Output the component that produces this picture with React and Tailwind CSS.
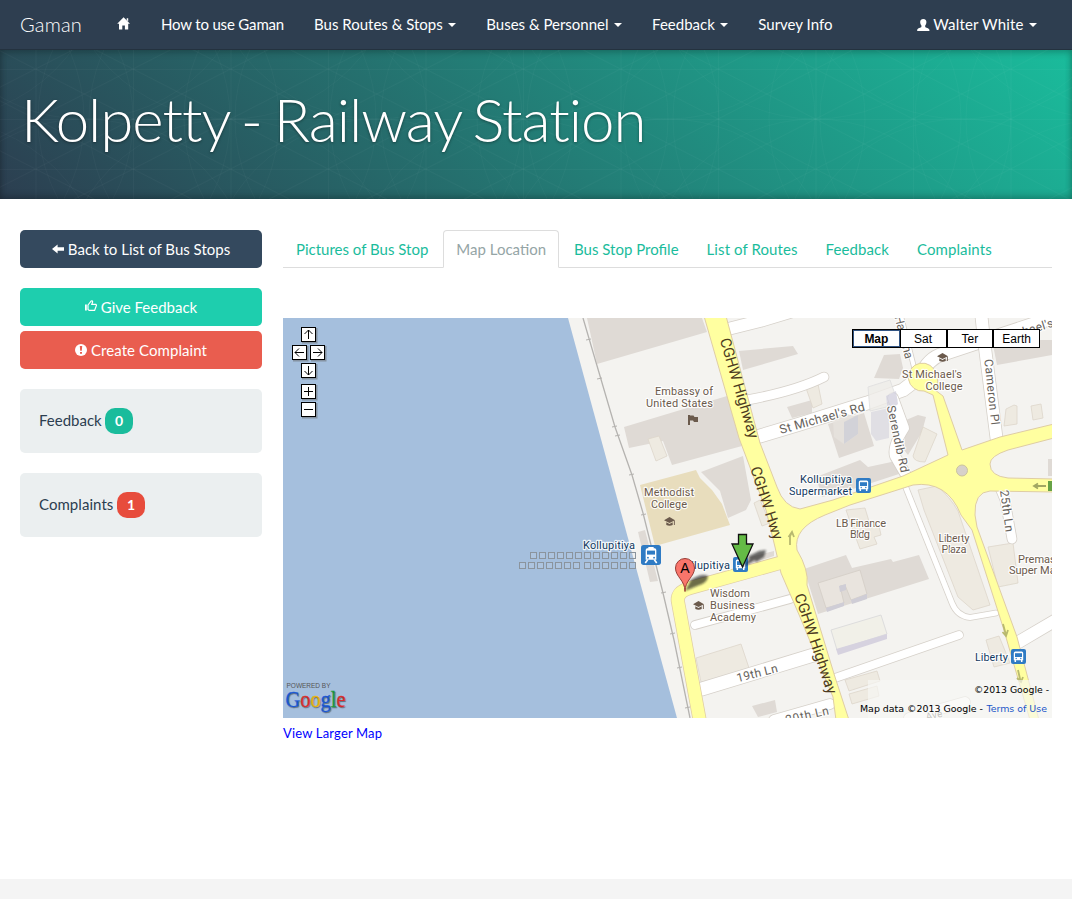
const Caret = () => (
  <span className="ml-[5.500px] inline-block h-0 w-0 border-x-4 border-t-4 border-x-transparent border-t-white align-[3px]" />
);

const UserIcon = () => (
  <svg className="mr-[3px] inline-block h-[12px] w-[13px] align-[-1px]" viewBox="0 0 13 12" fill="currentColor">
    <path d="M6.3 0C8.5 0 9.6 1.3 9.4 3.4C9.3 5 8.5 5.8 8.2 6.6V8.1C8.6 8.9 12 9.2 12.4 10.8V12H.2V10.8C.6 9.2 4 8.9 4.4 8.1V6.6C4.1 5.8 3.3 5 3.2 3.4C3 1.3 4.1 0 6.3 0Z" />
  </svg>
);

const HomeIcon = () => (
  <svg className="inline-block h-[13px] w-[14px] align-[-1px]" viewBox="0 0 14 13" fill="currentColor">
    <path d="M6.6 .3L13 6.8H11.2V12.6H7.9V8.6H5.3V12.6H2V6.8H.2L6.6 .3ZM9.7 1.2H11.2V4.6L9.7 3Z" />
  </svg>
);

const NAV = [
  ["How to use Gaman", false],
  ["Bus Routes & Stops", true],
  ["Buses & Personnel", true],
  ["Feedback", true],
  ["Survey Info", false],
];

const TABS = ["Pictures of Bus Stop", "Map Location", "Bus Stop Profile", "List of Routes", "Feedback", "Complaints"];

function Navbar() {
  return (
    <nav className="flex h-[50px] items-center border-b border-[#24323f] bg-[#2e3e50] pb-[2px] text-[15px] leading-[20px] text-white">
      <a className="ml-[20px] mr-[20px] w-[62px] whitespace-nowrap text-[20px] font-light tracking-[0.200px]">Gaman</a>
      <a className="-mt-[1px] px-[15px]"><HomeIcon /></a>
      {NAV.map(([label, menu], i) => (
        <a key={label} className={"whitespace-nowrap px-[15px]" + (i === 0 ? " tracking-[-0.170px]" : "")}>{label}{menu && <Caret />}</a>
      ))}
      <a className="ml-auto mr-[20px] whitespace-nowrap px-[15px] tracking-[0.150px]"><UserIcon />Walter White<Caret /></a>
    </nav>
  );
}

function Banner() {
  return (
    <header className="relative h-[149px] bg-[linear-gradient(45deg,#2c3e50_0%,#1abc9c_100%)] shadow-[inset_0_3px_7px_rgba(0,0,0,0.2),inset_0_-3px_7px_rgba(0,0,0,0.2)]">
      <svg className="absolute inset-0 h-full w-full" aria-hidden="true">
        <defs>
          <pattern id="lattice" width="195" height="100" x="-62" y="19" patternUnits="userSpaceOnUse">
            <g fill="none" stroke="#fff" strokeOpacity=".028" strokeWidth="1">
              <path d="M.5 0V100M98 0V100M0 .5H195M0 50.500H195" />
              <path d="M0 0L195 100M97.500 0L195 50M0 50L97.500 100M97.500 0L0 50M195 0L0 100M195 50L97.500 100" />
            </g>
          </pattern>
        </defs>
        <rect width="100%" height="100%" fill="url(#lattice)" />
        <g fill="none" stroke="#fff" strokeOpacity=".028">
          {[-210, -64, 84, 230, 376, 522, 668, 815, 961, 1107, 1253].map((x) => (
            <g key={x}>
              <circle cx={x - 169} cy="69" r="169" />
              <circle cx={x + 174} cy="69" r="169" />
              <circle cx={x} cy="-100" r="169" />
              <circle cx={x} cy="238" r="169" />
            </g>
          ))}
        </g>
      </svg>
      <h1 className="relative whitespace-nowrap pl-[21px] pt-[34px] text-[60px] font-light leading-[70px] tracking-[-1.050px] text-white [font-variant-ligatures:none] [text-shadow:0_1px_3px_rgba(0,0,0,0.4)] [word-spacing:-3.500px]">
        Kolpetty - Railway Station
      </h1>
    </header>
  );
}

function Sidebar() {
  const btn = "flex h-[38px] items-center justify-center rounded-[5px] text-[15px] text-white";
  return (
    <aside className="w-[242px]">
      <a className={btn + " bg-[#34495e]"}>
        <svg className="mr-[4px] h-[10px] w-[12px]" viewBox="0 0 12 10" fill="currentColor"><path d="M0 5L5.600 .4V3.300H12V6.700H5.600V9.600Z" /></svg>
        Back to List of Bus Stops
      </a>
      <a className={btn + " mt-[20px] bg-[#1eceae]"}>
        <svg className="mr-[4px] -mt-[2px] h-[12px] w-[12px]" viewBox="0 0 12 12" fill="none" stroke="currentColor" strokeWidth="1.200">
          <path d="M0 4.500H1.800V10.500H0Z" fill="currentColor" stroke="none" />
          <path d="M3 5L6.200 1Q7.800 .6 7.600 2L6.800 4.400H11Q11.800 5 11.200 6L9.600 10.400H4.200L3 9.500Z" />
        </svg>
        Give Feedback
      </a>
      <a className={btn + " mt-[5px] bg-[#e95d4f] tracking-[0.080px]"}>
        <svg className="mr-[4px] -mt-[1px] h-[12px] w-[12px]" viewBox="0 0 12 12"><circle cx="6" cy="6" r="6" fill="#fff" /><path d="M4.800 2H7.200L6.800 6.800H5.200ZM5 8H7V9.800H5Z" fill="#e95d4f" /></svg>
        Create Complaint
      </a>
      <div className="mt-[20px] flex h-[64px] items-center rounded-[5px] bg-[#ebeff0] pl-[19px] text-[15px] text-[#2c3e50]">
        <span className="-mt-[2px] w-[63px]">Feedback</span><span className="ml-[3px] flex h-[26px] w-[28px] items-center justify-center rounded-[10px] bg-[#1abc9c] pb-[2px] text-[14px] font-bold text-white">0</span>
      </div>
      <div className="mt-[20px] flex h-[64px] items-center rounded-[5px] bg-[#ebeff0] pl-[19px] text-[15px] text-[#2c3e50]">
        <span className="-mt-[2px] w-[75px] tracking-[0.050px]">Complaints</span><span className="ml-[3px] flex h-[26px] w-[28px] items-center justify-center rounded-[10px] bg-[#e74c3c] pb-[2px] text-[14px] font-bold text-white">1</span>
      </div>
    </aside>
  );
}

const Road = ({ d, w }) => (
  <g fill="none" strokeLinecap="round" strokeLinejoin="round">
    <path d={d} stroke="#d6d1ca" strokeWidth={w + 1.6} />
    <path d={d} stroke="#fff" strokeWidth={w} />
  </g>
);

const Bus = ({ x, y, s = 15, train }) => (
  <g transform={`translate(${x} ${y}) scale(${s / 15})`}>
    <rect width="15" height="15" rx="2" fill="#2f7bc4" />
    {train ? (
      <>
        <path d="M5.500 1.500H9.500V2.500H10.500Q11.500 2.700 11.500 4V11H3.500V4Q3.500 2.700 4.500 2.500H5.500Z" fill="#fff" />
        <path d="M4.500 4.200H10.500V7.200H4.500Z" fill="#2f7bc4" />
        <path d="M5 11L3.200 13.500M10 11L11.800 13.500" stroke="#fff" strokeWidth="1.200" />
      </>
    ) : (
      <>
        <path d="M2.800 4Q2.800 2.500 4.300 2.500H10.700Q12.200 2.500 12.200 4V11.300H2.800Z" fill="#fff" />
        <path d="M4 4.200H11V8H4Z" fill="#2f7bc4" />
        <path d="M4.300 11V13M10.700 11V13" stroke="#fff" strokeWidth="1.500" />
      </>
    )}
    <circle cx="5.200" cy="9.500" r=".7" fill="#2f7bc4" /><circle cx="9.800" cy="9.500" r=".7" fill="#2f7bc4" />
  </g>
);

const Cap = ({ x, y }) => (
  <g transform={`translate(${x} ${y})`} fill="#6b5a4c">
    <path d="M0 3.200L5.500 0L11 3.200L5.500 6Z" /><path d="M2.300 5.200L5.500 7L8.700 5.200V8Q5.500 9.600 2.300 8Z" /><path d="M9.900 3.500H10.800V8H9.900Z" />
  </g>
);

const LABELS = [
  [684, 395, 58, "Embassy of"], [679.500, 407, 67, "United States"],
  [669, 496, 50, "Methodist"], [669, 508, 36, "College"],
  [932, 378, 60, "St Michael's"], [944, 390, 37, "College"],
  [861, 527, 50, "LB Finance"], [860, 538, 20, "Bldg"],
  [954, 542, 31, "Liberty"], [954, 553, 25, "Plaza"],
  [730, 597, 40, "Wisdom"], [732.500, 609, 45, "Business"], [733, 621, 46, "Academy"],
];
const BLUE = [
  [609, 549, 52, "Kollupitiya"], [826, 483, 52, "Kollupitiya"], [820.500, 495, 63, "Supermarket"],
  [704, 569, 52, "Kollupitiya"], [991.500, 661, 33, "Liberty"],
];
const STREETS = [
  [739.500, 388, 73.500, 104, 15, "CGHW Highway"], [767, 503, 72, 76, 15, "CGHW Hwy"], [816, 643.500, 71.500, 105, 15, "CGHW Highway"],
  [822, 418, -15.500, 88, 12.500, "St Michael's Rd"], [992, 392, 84, 66, 12, "Cameron Pl"],
  [898, 439, 78, 68, 12, "Serendib Rd"], [1007, 511, 82, 42, 12, "25th Ln"],
  [757, 673, -14, 42, 12, "19th Ln"], [807, 715, -13, 44, 12, "20th Ln"],
  [1028, 330, -17, 52, 12, "Michael's"], [904, 337, 76, 44, 12, "Havelina"],
  [934, 715, -12, 17, 10, "Ave"],
];
const BOXES = [[529.500, 552, 12], [518.500, 562, 7], [584, 562, 6]];
const CONTROLS = [
  [301, 327, "M7.500 12V3M3.500 7L7.500 3L11.500 7"], [292, 345, "M12 7.500H3M7 3.500L3 7.500L7 11.500"],
  [310, 345, "M3 7.500H12M8 3.500L12 7.500L8 11.500"], [301, 363, "M7.500 3V12M3.500 8L7.500 12L11.500 8"],
  [301, 384, "M7.500 3V12M3 7.500H12"], [301, 402, "M3 7.500H12"],
];

function GoogleMap() {
  return (
    <svg className="absolute inset-0 h-full w-full" viewBox="283 318 769 400" fontFamily="Roboto, 'Liberation Sans', sans-serif">
      <rect x="283" y="318" width="769" height="400" fill="#f4f3f0" />
      <path d="M283 318H568L677 718H283Z" fill="#a5bfdd" />
      <g fill="#dfdad5">
        <path d="M587 318H702L707 332L597 364Z" />
        <path d="M624 427L727 396L742 446L672 465L663 441L629 448Z" />
        <path d="M701 472L743 456L751 500L746 510L728 518L720 491Z" />
        <path d="M739 351L793 346L798 354L743 370Z" />
        <path d="M787 407L812 400L812 413L792 418Z" />
        <path d="M874 378L884 355L900 354L903 368L899 379Z" />
        <path d="M828 424L864 413L874 446L839 458Z" />
        <path d="M906 420L918 415L926 417L922 432L908 455L904 450Z" />
        <path d="M816 477L860 460L868 467L896 461L902 473L850 490L822 497Z" />
        <path d="M992 340H1052V355L997 365Z" />
        <path d="M804 569L846 555L852 568L891 559L893 562L919 555L929 579L818 614Z" />
        <path d="M638 532L645 530L658 581L650 582Z" />
        <path d="M752 706L775 700L777 712L758 717Z" />
        <path d="M735 561L774 551L774 556L740 567Z" />
        <path d="M1048 459H1052V476H1048Z" />
      </g>
      <path d="M640 485L696 470L700 478L712 490L722 504L730 525L655 546Z" fill="#e8ddbd" />
      <g fill="#eeeae1" stroke="#ddd6ca" strokeWidth=".8">
        <path d="M648 439L659 436L667 456L656 461Z" />
        <path d="M754 503L760 500L770 523L762 526Z" />
        <path d="M923 427L937 434L925 462Q914 462 913 456Z" />
        <path d="M918 490L937 486Q950 497 958 511L990 605L973 610L958 597L924 510Z" />
        <path d="M846 510L865 508L871 528L879 526L881 535L874 537L877 544L860 549L853 530Z" />
        <path d="M988 547L1013 543L1018 583L998 587Z" />
        <path d="M986 640L999 636L1010 663L994 667Z" />
        <path d="M696 658L741 644L750 671L701 682Z" />
        <path d="M845 680L877 671L880 681L849 691Z" /><path d="M849 694L877 686L879 696L852 704Z" />
        <path d="M1006 409L1014 405L1017 406V424L1004 426Z" /><path d="M1031 406L1041 404L1043 418L1033 420Z" />
        <path d="M806 388L818 384L822 404L813 408Z" />
      </g>
      <g stroke="#b5b3b0" fill="none">
        <path d="M583 318L615 427L632 475L643 513L663 593L674 640L690 718" strokeWidth="1.300" />
        <path d="M586 340L591 339M597 379L602 378M612 427L617 426M615 436L620 435M629 475L634 474M641 515L646 514M661 593L666 592M670 634L675 633M677 668L682 667M685 708L690 707" />
      </g>
      <Road d="M720 331L760 321L790 312" w={12} />
      <Road d="M747 400Q796 391 824 377" w={9} />
      <Road d="M760 436L800 424L867 403L903 390L920 377Q928 358 943 354L1052 318" w={13} />
      <Road d="M900 312L916 375" w={4} />
      <Road d="M981 312L984 340L997 442" w={12} />
      <Road d="M893 398L904 428Q892 447 895 456L906 475" w={10} />
      <Road d="M906 488L952 603Q957 616 970 617.500L996 613" w={5} />
      <Road d="M1000 488L1005 500L1012 539" w={9} />
      <Road d="M695 625L790 599" w={8} />
      <Road d="M702 689L820 653" w={13} />
      <Road d="M835 678L959 635" w={8} />
      <Road d="M774 720L830 704M909 718L965 702" w={10} />
      <Road d="M1017 643L1056 620" w={12} />
      <path d="M783 562L690 588Q676 592 678 602L700 722" stroke="#dfcda4" strokeWidth="14" fill="none" />
      <path d="M704 316L739 438L766 510L775 547L781 573L800 617L833 697L836 720H849L835 677L807 585Q809 570 797 550Q793 528 825 515L850 505L913 485Q947 480 961 515L972 530L1003 627L1030 720H1039L1017 637L977 527L975 515Q974 492 990 491L1054 492V479L1008 478Q990 476 990 464Q990 456 1008 450L1054 438V424L1000 437L962 450L943 396L935 390Q940 382 936 374A14 14 0 1 0 924 391L933 395L948 455L903 476L833 500L800 509Q784 507 777 487L760 443L726 316Z" fill="#ffffa0" stroke="#dfcda4" />
      <path d="M787 561L690 588Q676 592 678 602L700 722" stroke="#ffffa0" strokeWidth="12.500" fill="none" />
      <circle cx="962" cy="470.500" r="5.500" fill="#d7d1ca" stroke="#cbc39d" />
      <g opacity=".8">
        <path d="M868 387L890 380L897 400L895 405L870 411Z" fill="#efede9" stroke="#ddd" />
        <path d="M871 412L889 408V438L876 441L871 434Z" fill="#dcdbe2" /><path d="M886 396L896 391L898 404L888 412Z" fill="#d4d2df" />
        <path d="M833 419L843 412L855 417L858 434L844 444L834 437Z" fill="#e7e3de" /><path d="M844 422L858 415V434L844 444Z" fill="#d0d1d9" />
      </g>
      <path d="M818 583L860 570L867 594L851 600L845 585L840 586L844 603L826 608Z" fill="#e9e4de" stroke="#d7d1ca" />
      <path d="M826 608L844 602V606L827 612ZM851 600L867 594V599L852 604ZM839 586L846 584V590L840 592Z" fill="#cfcdd6" />
      <path d="M831 630L881 615L887 634L837 650Z" fill="#f1f0e8" stroke="#ddd" /><path d="M836 649L887 634V639L838 655Z" fill="#d6d2df" />
      <g fill="none" stroke="#b8b96f" strokeWidth="1.800">
        <path d="M790 545V536L792 532M788.500 537L792 532L794 537M1003 624L1006 635M1002.500 632L1006 636L1008 630M1018 670L1020.500 681M1017 678L1021 682L1023 677" />
        <path d="M1046 486H1034M1038 483.500L1034 486L1038 488.500" stroke="#a2a763" />
      </g>
      <rect x="1048" y="481" width="4" height="10" fill="#67a246" />
      <g textAnchor="middle" paintOrder="stroke" stroke="#fff" strokeOpacity=".85" strokeWidth="2.400" strokeLinejoin="round">
        {STREETS.map(([x, y, r, w, s, t], i) => (
          <text key={i} transform={`translate(${x} ${y}) rotate(${r})`} y={s * 0.35} fontSize={s} textLength={w} fill={i < 3 ? "#4c3a20" : "#66625c"} strokeOpacity={i < 3 ? 0 : 0.85}>{t}</text>
        ))}
        <g fontSize="11" fill="#6b5a4c">{LABELS.map(([x, y, w, t], i) => <text key={i} x={x} y={y} textLength={w}>{t}</text>)}</g>
        <g fontSize="11" fill="#12395f">{BLUE.map(([x, y, w, t], i) => <text key={i} x={x} y={y} textLength={w}>{t}</text>)}</g>
        <g fontSize="11" fill="#6b5a4c" textAnchor="start"><text x="1018" y="563">Premasiri</text><text x="1009" y="574">Super Market</text></g>
      </g>
      <g fill="#dfe6ec" fillOpacity=".15" stroke="#8b949d">
        {BOXES.map(([x, y, n]) => Array.from({ length: n }, (_, i) => <rect key={x + "-" + i} x={Math.round(x + i * 9) + 0.5} y={y + 0.5} width="6" height="6" />))}
      </g>
      <Cap x="664" y="517" /><Cap x="693" y="601" /><Cap x="937" y="353" />
      <path d="M688 415H690V425H688ZM689.500 415.500H693.500L694.500 417H698V422H694L693 420.500H689.500Z" fill="#6b5a4c" />
      <Bus x="641" y="545" s="20" train /><Bus x="733" y="557" /><Bus x="856" y="478" /><Bus x="1011" y="649" />
      <defs><filter id="soft"><feGaussianBlur stdDeviation="1.200" /></filter></defs>
      <path d="M685 591L691 580Q701 573 708 576Q708 583 697 586ZM743 567L750 558L747 557L759 551L766 550L764 557L756 562L755 560Z" fill="#111" opacity=".6" filter="url(#soft)" />
      <path d="M685 591.500C685 580 675.500 577 675.500 568A9.500 9.500 0 0 1 694.500 568C694.500 577 685 580 685 591.500Z" fill="#f9756b" stroke="#973b34" />
      <text x="685" y="573" fontSize="14" textAnchor="middle" fontFamily="'Liberation Sans', sans-serif">A</text>
      <path d="M738.500 534.500H746.500V544H753L742.500 567L732 544H738.500Z" fill="#64bb46" stroke="#111" strokeWidth="1.300" />
      <rect x="868" y="680" width="184" height="38" fill="#f8f7f5" opacity=".65" />
      <g fontFamily="'DejaVu Sans', 'Liberation Sans', sans-serif" fontSize="9.300" fill="#000">
        <text x="974" y="693" textLength="75" lengthAdjust="spacingAndGlyphs">©2013 Google -</text>
        <text x="860" y="712" textLength="123" lengthAdjust="spacingAndGlyphs">Map data ©2013 Google -</text>
        <text x="986.500" y="712" textLength="60.500" lengthAdjust="spacingAndGlyphs" fill="#1a55c8">Terms of Use</text>
      </g>
      <text x="286.500" y="688" fontSize="6.500" textLength="44" fill="#555" fontFamily="'Liberation Sans', sans-serif">POWERED BY</text>
      <text x="285.500" y="707" fontSize="24" textLength="60" lengthAdjust="spacingAndGlyphs" fontFamily="'Liberation Serif', serif" className="[text-shadow:1px_1px_1px_rgba(0,0,0,0.35)]" strokeWidth=".3">
        <tspan fill="#1d5bd8" stroke="#1d5bd8">G</tspan><tspan fill="#e02f2f" stroke="#e02f2f">o</tspan><tspan fill="#efb90e" stroke="#efb90e">o</tspan><tspan fill="#1d5bd8" stroke="#1d5bd8">g</tspan><tspan fill="#22a044" stroke="#22a044">l</tspan><tspan fill="#e02f2f" stroke="#e02f2f">e</tspan>
      </text>
      {CONTROLS.map(([x, y, d]) => (
        <g key={d + y} transform={`translate(${x} ${y})`}>
          <rect x="1" y="1" width="15.500" height="15.500" fill="#666" opacity=".5" />
          <rect x=".5" y=".5" width="14" height="14" fill="#fff" stroke="#000" />
          <path d={d} fill="none" stroke="#000" />
        </g>
      ))}
    </svg>
  );
}

export default function App() {
  return (
    <div className="flex h-[899px] w-[1072px] flex-col overflow-hidden bg-white font-['Lato',sans-serif]">
      <Navbar />
      <Banner />
      <main className="flex gap-[21px] px-[20px] pt-[31px]">
        <Sidebar />
        <section className="w-[769px]">
          <div className="flex h-[38px] gap-[2px] border-b border-[#ddd] text-[15px] leading-[20px] text-[#1abc9c]">
            {TABS.map((t, i) => (
              <a key={t} className={i === 1
                ? "h-[38px] whitespace-nowrap rounded-t-[4px] border border-b-white border-[#ddd] bg-white px-[12px] pt-[8px] text-[#95a5a6]"
                : "whitespace-nowrap px-[13px] pt-[9px]" + (i > 2 ? " tracking-[0.090px]" : "")}>{t}</a>
            ))}
          </div>
          <div className="relative mt-[50px] h-[400px] overflow-hidden">
            <GoogleMap />
            <div className="absolute right-[12px] top-[11px] flex h-[19px] w-[188px] border border-black bg-white font-['Liberation_Sans',sans-serif] text-[12px] leading-[18px] text-black">
              <span className="flex-1 border border-[#345684] text-center font-bold leading-[16px]">Map</span>
              <span className="flex-1 border-x border-black text-center">Sat</span>
              <span className="flex-1 border-x border-black text-center">Ter</span>
              <span className="flex-1 border-l border-black text-center">Earth</span>
            </div>
          </div>
          <a className="mt-[5px] block text-[13px] leading-[20px] tracking-[0.170px] text-[#0000ff]">View Larger Map</a>
        </section>
      </main>
      <footer className="mt-auto h-[20px] bg-[#f4f4f4]" />
    </div>
  );
}
